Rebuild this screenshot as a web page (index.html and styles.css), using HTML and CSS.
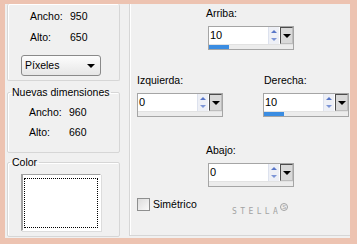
FILE: index.html
```html
<!DOCTYPE html>
<html lang="es">
<head>
    <meta charset="UTF-8">
    <title>Tamaño del lienzo</title>
    <link rel="stylesheet" href="styles.css">
</head>
<body>
    <div class="dialog">
        <div class="side">
            <div class="group first">
                <div class="dim-row"><span class="dim-label">Ancho:</span><span>950</span></div>
                <div class="dim-row"><span class="dim-label">Alto:</span><span>650</span></div>
                <div class="combo">
                    <span>Píxeles</span>
                    <span class="combo-arrow"></span>
                </div>
            </div>

            <fieldset class="group dims">
                <legend>Nuevas dimensiones</legend>
                <div class="group-body">
                    <div class="dim-row"><span class="dim-label">Ancho:</span><span>960</span></div>
                    <div class="dim-row"><span class="dim-label">Alto:</span><span>660</span></div>
                </div>
            </fieldset>

            <fieldset class="group color">
                <legend>Color</legend>
                <div class="group-body">
                    <div class="swatch"><div class="swatch-focus"></div></div>
                </div>
            </fieldset>
        </div>

        <div class="offsets">
            <div class="offset-row center">
                <label class="field-label">Arriba:</label>
                <div class="spin">
                    <div class="spin-top">
                        <span class="spin-value">10</span>
                        <span class="spin-arrows"><i class="up"></i><i class="down"></i></span>
                        <span class="spin-drop"></span>
                    </div>
                    <div class="spin-track"><div class="spin-fill" style="width: 20px"></div></div>
                </div>
            </div>

            <div class="offset-row pair">
                <div class="pair-left">
                    <label class="field-label">Izquierda:</label>
                    <div class="spin">
                        <div class="spin-top">
                            <span class="spin-value">0</span>
                            <span class="spin-arrows"><i class="up"></i><i class="down"></i></span>
                            <span class="spin-drop"></span>
                        </div>
                        <div class="spin-track"></div>
                    </div>
                </div>
                <div class="pair-right">
                    <label class="field-label">Derecha:</label>
                    <div class="spin">
                        <div class="spin-top">
                            <span class="spin-value">10</span>
                            <span class="spin-arrows"><i class="up"></i><i class="down"></i></span>
                            <span class="spin-drop"></span>
                        </div>
                        <div class="spin-track"><div class="spin-fill" style="width: 20px"></div></div>
                    </div>
                </div>
            </div>

            <div class="offset-row center bottom">
                <label class="field-label">Abajo:</label>
                <div class="spin">
                    <div class="spin-top">
                        <span class="spin-value">0</span>
                        <span class="spin-arrows"><i class="up"></i><i class="down"></i></span>
                        <span class="spin-drop"></span>
                    </div>
                    <div class="spin-track"></div>
                </div>
            </div>

            <div class="check-row">
                <div class="check">
                    <span class="check-box"></span>
                    <span>Simétrico</span>
                </div>
                <div class="watermark">STELLA<span class="mark">S</span></div>
            </div>
        </div>
    </div>
</body>
</html>
```

FILE: styles.css
```css
* {
    box-sizing: border-box;
}

body {
    margin: 0;
    padding: 4px 7px 0 5px;
    height: 244px;
    background-color: #edc3b1;
    font-family: 'Liberation Sans', Arial, sans-serif;
    font-size: 10.5px;
    line-height: 13px;
    color: #000;
    overflow: hidden;
}

.dialog {
    display: flex;
    height: 234px;
    background-color: #f0f0f0;
    overflow: hidden;
}

/* Left column */
.side {
    width: 117px;
    padding-left: 2px;
    display: flex;
    flex-direction: column;
}

.group {
    width: 113px;
    border: 1px solid #d6d6d6;
    border-radius: 2px;
    box-shadow: inset 1px 1px 0 #fff;
}

.group.first {
    border-top: none;
    height: 77px;
    padding: 6px 0 0 13px;
}

fieldset.group {
    margin: 0;
    padding: 0;
    min-width: 0;
}

legend {
    padding: 0 2px;
    margin-left: 2px;
    line-height: 13px;
}

.dims {
    margin-top: 5px !important;
}

.dims .group-body {
    padding: 7px 0 6px 21px;
}

.dims .dim-row {
    height: 20px;
    padding-left: 0;
}

.color {
    margin-top: 3px !important;
}

.color .group-body {
    padding: 5px 0 5px 13px;
}

.dim-row {
    display: flex;
    height: 21px;
    padding-left: 9px;
}

.dim-label {
    width: 40px;
}

.combo {
    margin-top: 3px;
    width: 80px;
    height: 21px;
    border: 1px solid #8a8a8a;
    border-radius: 3px;
    background: linear-gradient(#fdfdfd, #e6e6e6);
    display: flex;
    align-items: center;
    justify-content: space-between;
    padding: 0 5px 0 3px;
}

.combo-arrow {
    width: 0;
    height: 0;
    border-left: 4px solid transparent;
    border-right: 4px solid transparent;
    border-top: 4px solid #000;
}

.swatch {
    width: 80px;
    height: 57px;
    background-color: #fff;
    border-top: 1px solid #a0a0a0;
    border-left: 2px solid #a0a0a0;
    border-right: 1px solid #fff;
    border-bottom: 1px solid #fff;
    box-shadow: 1px 1px 0 #dcdcdc;
    padding: 3px 2px 2px 1px;
}

.swatch-focus {
    height: 100%;
    border: 1px dotted #000;
}

/* Right panel */
.offsets {
    margin-left: 7px;
    width: 221px;
    height: 232px;
    border-left: 1px solid #d6d6d6;
    border-bottom: 1px solid #d6d6d6;
    box-shadow: inset 1px 0 0 #fff;
    padding-top: 3px;
}

.offset-row.center {
    padding-left: 76px;
}

.offset-row.center .spin {
    margin-left: 2px;
}

.offset-row.pair {
    display: flex;
    margin-top: 24px;
    padding-left: 7px;
}

.offset-row.bottom {
    margin-top: 27px;
}

.pair-left {
    width: 126px;
}

.pair-right .field-label {
    margin-left: 1px;
}

.field-label {
    display: block;
    height: 13px;
    margin-bottom: 6px;
}

.spin {
    width: 86px;
    height: 24px;
    border: 1px solid #a5a5a5;
    background-color: #fff;
    display: flex;
    flex-direction: column;
}

.spin-top {
    display: flex;
    height: 17px;
}

.spin-value {
    flex: 1;
    padding-left: 1px;
    font-size: 11px;
    line-height: 17px;
}

.spin-arrows {
    width: 11px;
    display: flex;
    flex-direction: column;
    background-color: #eef0f6;
    border-left: 1px solid #dde2ee;
}

.spin-arrows i {
    flex: 1;
    display: flex;
    align-items: center;
    justify-content: center;
}

.spin-arrows i::after {
    content: '';
    width: 0;
    height: 0;
    border-left: 3px solid transparent;
    border-right: 3px solid transparent;
}

.spin-arrows .up::after {
    border-bottom: 3px solid #5876c8;
}

.spin-arrows .down::after {
    border-top: 3px solid #7d95d6;
}

.spin-drop {
    width: 13px;
    margin-left: 1px;
    background-color: #d9d9d9;
    border: 1px solid #4c4c4c;
    border-right-color: #bdbdbd;
    border-bottom-color: #bdbdbd;
    display: flex;
    align-items: center;
    justify-content: center;
}

.spin-drop::after {
    content: '';
    width: 0;
    height: 0;
    border-left: 4px solid transparent;
    border-right: 4px solid transparent;
    border-top: 4px solid #000;
}

.spin-track {
    flex: 1;
    background-color: #ececec;
    border-top: 1px solid #e2e2e2;
}

.spin-fill {
    height: 100%;
    background-color: #3b8de2;
}

.check-row {
    display: flex;
    margin-top: 11px;
    padding-left: 7px;
}

.check {
    width: 95px;
    display: flex;
    gap: 3px;
}

.check-box {
    width: 13px;
    height: 13px;
    border: 1px solid #8e8f8f;
    background: linear-gradient(135deg, #dcdcdc, #fafafa);
}

.watermark {
    margin-top: 9px;
    font-family: 'DejaVu Sans Mono', monospace;
    font-size: 8px;
    line-height: 9px;
    letter-spacing: 3.4px;
    color: #a3a3a3;
    display: flex;
    align-items: flex-start;
}

.mark {
    width: 8px;
    height: 8px;
    margin-top: -4px;
    margin-left: -1px;
    border: 1px solid #a3a3a3;
    border-radius: 50%;
    font-family: 'Liberation Sans', sans-serif;
    font-size: 6px;
    line-height: 6px;
    letter-spacing: 0;
    text-align: center;
}
```
